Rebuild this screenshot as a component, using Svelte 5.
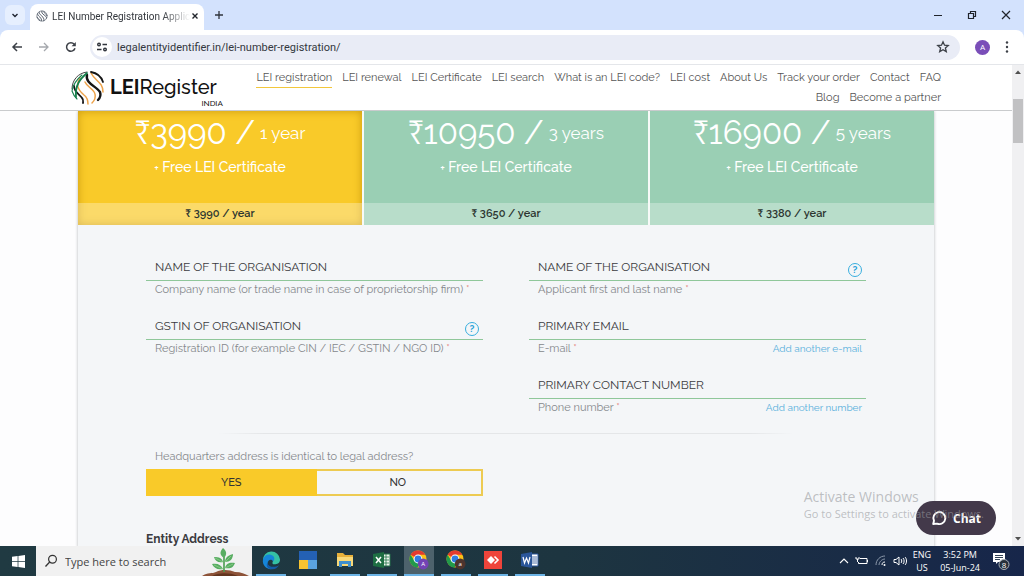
<!-- LEI registration form inside a browser window, with the desktop taskbar below. -->
<script lang="ts">
	type Field = { id: string; value: string; label: string; help?: boolean; add?: string };

	const nav = [
		'LEI registration', 'LEI renewal', 'LEI Certificate', 'LEI search', 'What is an LEI code?',
		'LEI cost', 'About Us', 'Track your order', 'Contact', 'FAQ', 'Blog', 'Become a partner'
	];

	const plans = [
		{ total: '3990', term: '1 year', yearly: '3990' },
		{ total: '10950', term: '3 years', yearly: '3650' },
		{ total: '16900', term: '5 years', yearly: '3380' }
	];

	const columns: Field[][] = [
		[
			{ id: 'company', value: 'NAME OF THE ORGANISATION', label: 'Company name (or trade name in case of proprietorship firm)' },
			{ id: 'regid', value: 'GSTIN OF ORGANISATION', label: 'Registration ID (for example CIN / IEC / GSTIN / NGO ID)', help: true }
		],
		[
			{ id: 'applicant', value: 'NAME OF THE ORGANISATION', label: 'Applicant first and last name', help: true },
			{ id: 'email', value: 'PRIMARY EMAIL', label: 'E-mail', add: 'Add another e-mail' },
			{ id: 'phone', value: 'PRIMARY CONTACT NUMBER', label: 'Phone number', add: 'Add another number' }
		]
	];

	const apps = ['edge', 'panel', 'files', 'excel', 'chrome', 'chrome2', 'anydesk', 'word'];

	let selected = $state(0);
	let sameAddress = $state('yes');
</script>

{#snippet chrome(badge: string, letter: string)}
	<svg viewBox="0 0 20 20" width="20" height="20">
		<circle cx="9" cy="9" r="8.5" fill="#fbc116" />
		<path d="M9 9 1.6 4.7A8.5 8.5 0 0 1 16.4 4.7H9Z" fill="#e33b2e" />
		<path d="M1.6 4.7A8.5 8.5 0 0 0 8.5 17.5L12.5 11 9 9 5.5 11Z" fill="#229a4b" />
		<circle cx="9" cy="9" r="4.4" fill="#fff" />
		<circle cx="9" cy="9" r="3.4" fill="#2f7de1" />
		<circle cx="14.2" cy="14" r="5.4" fill={badge} />
		<text x="14.2" y="16.2" font-size="6" fill="#fff" text-anchor="middle">{letter}</text>
	</svg>
{/snippet}

<div class="window">
	<div class="tabs">
		<button class="tab-search" aria-label="Search tabs">
			<svg viewBox="0 0 10 10" width="10" height="10"><path d="M2.5 4 5 6.5 7.5 4" fill="none" stroke="#1f2430" stroke-width="1.4" /></svg>
		</button>
		<div class="tab">
			<svg viewBox="0 0 14 14" width="12" height="12">
				<g fill="none" stroke="#4b5563" stroke-width="1.1">
					<circle cx="7" cy="7" r="6" stroke-width=".7" />
					<path d="M4 2C2 5 11 8 9 13M7 1C5 5 14 7 12 10M2 4C1 7 8 9 6 13M9 1.5C9 4 13 5 13 7M1 8C2 10 4 10 4 12.5" />
				</g>
			</svg>
			<span class="tab-title">LEI Number Registration Applic</span>
			<button aria-label="Close tab">
				<svg viewBox="0 0 8 8" width="8" height="8"><path d="m1.5 1.5 5 5m0-5-5 5" stroke="#20242b" stroke-width="1.4" /></svg>
			</button>
		</div>
		<button class="new-tab" aria-label="New tab">
			<svg viewBox="0 0 10 10" width="10" height="10"><path d="M5 1v8M1 5h8" stroke="#30343c" stroke-width="1.3" /></svg>
		</button>
		<div class="window-buttons">
			<button aria-label="Minimize"><svg viewBox="0 0 10 10" width="10" height="10"><path d="M1 5.5h8" stroke="#20242b" /></svg></button>
			<button aria-label="Restore">
				<svg viewBox="0 0 10 10" width="10" height="10"><path d="M1.5 3.5h5v5h-5zM3.5 3.2V1.5h5v5H6.8" fill="none" stroke="#20242b" stroke-width="1.2" /></svg>
			</button>
			<button aria-label="Close"><svg viewBox="0 0 10 10" width="10" height="10"><path d="m1 1 8 8m0-8L1 9" stroke="#20242b" stroke-width="1.2" /></svg></button>
		</div>
	</div>

	<div class="toolbar">
		<button aria-label="Back"><svg viewBox="0 0 12 12" width="12" height="12"><path d="M11 6H2m4-4L2 6l4 4" fill="none" stroke="#3c4047" stroke-width="1.5" /></svg></button>
		<button aria-label="Forward"><svg viewBox="0 0 12 12" width="12" height="12"><path d="M1 6h9M6 2l4 4-4 4" fill="none" stroke="#a5a8ad" stroke-width="1.3" /></svg></button>
		<button aria-label="Reload">
			<svg viewBox="0 0 12 12" width="12" height="12"><path d="M10 7.2A4.3 4.3 0 1 1 9.2 3.2" fill="none" stroke="#3c4047" stroke-width="1.5" /><path d="M10.8 1v4.2H6.6Z" fill="#3c4047" /></svg>
		</button>
		<div class="address">
			<button class="site-info" aria-label="Site information">
				<svg viewBox="0 0 12 12" width="12" height="12">
					<g fill="none" stroke="#30343c" stroke-width="1.4"><circle cx="3" cy="3.5" r="1.3" /><path d="M6.5 3.5H11M1 8.5h4.5" /><circle cx="9" cy="8.5" r="1.3" /></g>
				</svg>
			</button>
			<input aria-label="Address" value="legalentityidentifier.in/lei-number-registration/" />
			<button aria-label="Bookmark">
				<svg viewBox="0 0 14 14" width="14" height="14"><path d="m7 1.8 1.5 3.4 3.7.3-2.8 2.4.9 3.7L7 9.7l-3.3 1.9.9-3.7-2.8-2.4 3.7-.3Z" fill="none" stroke="#3c4047" stroke-width="1.3" /></svg>
			</button>
		</div>
		<button class="profile" aria-label="Profile">A</button>
		<button aria-label="Menu">
			<svg viewBox="0 0 4 12" width="4" height="12"><g fill="#3c4047"><circle cx="2" cy="1.5" r="1.2" /><circle cx="2" cy="6" r="1.2" /><circle cx="2" cy="10.5" r="1.2" /></g></svg>
		</button>
	</div>

	<div class="viewport">
		<div class="page">
			<header>
				<div class="header-inner">
					<a class="logo" href="#home" aria-label="LEI Register India">
						<svg viewBox="0 0 34 34" width="34" height="34">
							<g fill="none" stroke-linecap="round">
								<path d="M1 18C1 9 7 2 16 1" stroke="#444" stroke-width="1" />
								<path d="M9 7C4 15 8 20 13 24c4 3 4 6 4 9" stroke="#eda34b" stroke-width="1.5" />
								<path d="M3 15c0 6 6 9 8 12 2 2 1 4 1 5" stroke="#151515" stroke-width="1.8" />
								<path d="M14 11c2 5 9 7 10 12 1 4-1 7-3 9" stroke="#eda34b" stroke-width="1.5" />
								<path d="M16 4c-2 8 9 11 13 17 1 3 0 6-2 8" stroke="#151515" stroke-width="2.4" />
								<path d="M20 2c4 8 12 9 12 19" stroke="#eda34b" stroke-width="1.5" />
								<path d="M20 1c6 1 10 4 12 10" stroke="#151515" stroke-width="1.8" />
								<path d="M16 2C9 8 4 14 5 26" stroke="#16814d" stroke-width="1.8" />
								<path d="M11 4C5 9 2 14 1 20c1 3 3 6 5 8" stroke="#16814d" stroke-width="1.1" />
							</g>
						</svg>
						<span class="wordmark"><span class="name"><b>LEI</b>Register</span><small>INDIA</small></span>
					</a>
					<nav>
						{#each nav as item, i}
							<a href="#{i}" class:current={i === 0}>{item}</a>
						{/each}
					</nav>
				</div>
			</header>

			<main>
				<div class="plans">
					{#each plans as plan, i}
						<button class="plan" class:selected={selected === i} onclick={() => (selected = i)}>
							<span class="price">₹{plan.total} / <span class="term">{plan.term}</span></span>
							<span class="free"><span class="plus">+</span> Free LEI Certificate</span>
							<span class="yearly">₹ {plan.yearly} / year</span>
						</button>
					{/each}
				</div>

				<form>
					<div class="columns">
						{#each columns as fields}
							<div class="column">
								{#each fields as field}
									<div class="field">
										<div class="entry">
											<input id={field.id} value={field.value} />
											{#if field.help}<button type="button" class="help" aria-label="Help">?</button>{/if}
										</div>
										<div class="caption">
											<label for={field.id}>{field.label} <span class="required">*</span></label>
											{#if field.add}<a href="#{field.id}">{field.add}</a>{/if}
										</div>
									</div>
								{/each}
							</div>
						{/each}
					</div>
					<hr />
					<fieldset>
						<legend>Headquarters address is identical to legal address?</legend>
						<div class="toggle">
							<label><input type="radio" name="same" value="yes" bind:group={sameAddress} />YES</label>
							<label><input type="radio" name="same" value="no" bind:group={sameAddress} />NO</label>
						</div>
					</fieldset>
					<h2>Entity Address</h2>
				</form>
			</main>
		</div>

		<div class="scrollbar" aria-hidden="true">
			<svg viewBox="0 0 8 6" width="8" height="6"><path d="M1 5h6L4 1.5Z" fill="#505050" /></svg>
			<div class="track"><div class="thumb"></div></div>
			<svg viewBox="0 0 8 6" width="8" height="6"><path d="M1 1h6L4 4.5Z" fill="#505050" /></svg>
		</div>

		<button class="chat">
			<svg viewBox="0 0 16 16" width="16" height="16"><path d="M2.2 14 3 10.8A6 6 0 1 1 6 13.6Z" fill="none" stroke="#fff" stroke-width="1.9" stroke-linejoin="round" /></svg>
			Chat
		</button>
		<div class="watermark">
			<strong>Activate Windows</strong>
			<span>Go to Settings to activate Windows.</span>
		</div>
	</div>

	<div class="taskbar">
		<button class="start" aria-label="Start">
			<svg viewBox="0 0 12 12" width="13" height="13"><path d="M0 1.7 5.2 1v4.7H0zM5.9.9 12 0v5.7H5.9zM0 6.4h5.2V11L0 10.3zM5.9 6.4H12V12l-6.1-.9z" fill="#fff" /></svg>
		</button>
		<label class="search">
			<svg viewBox="0 0 14 14" width="14" height="14"><circle cx="8.5" cy="5.2" r="3.9" fill="none" stroke="#333" stroke-width="1.2" /><path d="M5.7 8 1.5 12.5" stroke="#333" stroke-width="1.3" /></svg>
			<input type="search" placeholder="Type here to search" aria-label="Type here to search" />
			<svg class="sprout" viewBox="0 0 48 28" width="48" height="28">
				<path d="M0 28c6-4 10-2 14-4 6-3 14-2 19 0 6 0 10 2 14 4Z" fill="#8d5338" />
				<path d="M10 28c6-3 16-4 26 0Z" fill="#63351f" />
				<path d="M22 24V9" stroke="#4a9c4f" stroke-width="1.6" />
				<g fill="#58ad62"><path d="M22 10c-5-3-4-7-1-10 4 3 4 7 1 10Z" /><path d="M21 14c-5 1-8-1-9-5 5 0 8 1 9 5Z" /><path d="M23 14c0-5 4-7 8-8 0 5-3 8-8 8Z" /><path d="M21 21c-6 1-9-1-11-5 6-1 9 1 11 5Z" /><path d="M23 20c1-5 5-6 10-5-2 5-5 6-10 5Z" /></g>
				<path d="m13 10 8 4m2 0 6-6M12 17l9 4m2-1 8-4" stroke="#98d292" stroke-width=".7" />
			</svg>
		</label>
		<div class="apps">
			{#each apps as app}
				<button class="app" class:open={app !== 'panel'} class:active={app === 'chrome'} aria-label={app}>
					{#if app === 'edge'}
						<svg viewBox="0 0 20 20" width="19" height="19">
							<path d="M1 10a9 9 0 0 1 18-1c0 4-3 5-6 5-2 0-2-1-2-2 1-1 1-5-4-5-3 0-5 1-6 3Z" fill="#35c1a4" />
							<path d="M1 9c1-4 5-6 8-5 4 1 5 4 3 7-2-3-6-2-6 2 0 3 2 5 5 6C5 20 0 15 1 9Z" fill="#1686d8" />
							<path d="M6 12c0 5 7 6 12 3-2 3-5 5-9 4-4-1-5-5-3-7Z" fill="#145ba7" />
						</svg>
					{:else if app === 'panel'}
						<svg viewBox="0 0 18 18" width="18" height="18"><path d="M0 0h18v18H0z" fill="#2461b4" /><path d="M0 9h9v9H0z" fill="#f7c331" /><path d="M9 9h9v9H9z" fill="#5ba3de" /></svg>
					{:else if app === 'files'}
						<svg viewBox="0 0 18 16" width="18" height="16"><path d="M1 1h6l2 2h8v11H1z" fill="#e8b13b" /><path d="M1 5h16v9H1z" fill="#f9d978" /><path d="M3 9h12v6h-3v-3H6v3H3z" fill="#3f8fcd" /></svg>
					{:else if app === 'excel'}
						<svg viewBox="0 0 18 16" width="18" height="16"><path d="M8 2h9v12H8z" fill="#eef5ef" stroke="#24734a" /><path d="M9 5h7M9 8h7M9 11h7M13 2v12" stroke="#24734a" stroke-width=".8" /><path d="m0 2 11-2v16L0 14z" fill="#1e6e43" /><path d="m3 5 5 6m0-6-5 6" stroke="#fff" stroke-width="1.5" /></svg>
					{:else if app === 'chrome'}
						{@render chrome('#7342b5', 'A')}
					{:else if app === 'chrome2'}
						{@render chrome('#4d342e', 'a')}
					{:else if app === 'anydesk'}
						<svg viewBox="0 0 18 18" width="18" height="18"><path d="M0 0h18v18H0z" fill="#ef443b" /><path d="m7 5 4 4-4 4-4-4Z" fill="#fff" /><path d="m10.5 5.5 3.5 3.5-3.5 3.5" fill="none" stroke="#fff" stroke-width="1.6" /></svg>
					{:else}
						<svg viewBox="0 0 18 16" width="18" height="16"><path d="M8 2h9v12H8z" fill="#fff" stroke="#2b579a" /><path d="M10 5h6m-6 2h6m-6 2h6m-6 2h6" stroke="#2b579a" stroke-width=".8" /><path d="m0 2 11-2v16L0 14z" fill="#2b579a" /><path d="m2 5 1.5 6 2-5 2 5L9 5" fill="none" stroke="#fff" stroke-width="1.2" /></svg>
					{/if}
				</button>
			{/each}
		</div>
		<div class="tray">
			<svg viewBox="0 0 10 10" width="10" height="10"><path d="m1 7 4-4 4 4" fill="none" stroke="#fff" stroke-width="1.1" /></svg>
			<svg viewBox="0 0 14 10" width="14" height="10"><path d="M5 2.5h7v5H3.5V6M12.5 4v2M1 1v2h3V1M2.5 3v3" fill="none" stroke="#fff" /></svg>
			<svg viewBox="0 0 12 12" width="12" height="12"><g fill="none" stroke="#8b98aa"><path d="M1 10C1 5 5 1 10 1M4 10c0-3 3-6 6-6" /><path d="M7 10c0-2 1-3 3-3" stroke="#fff" /></g><circle cx="9.5" cy="10" r="1" fill="#fff" /></svg>
			<svg viewBox="0 0 14 12" width="14" height="12"><path d="M1 4.5h2L6 2v8L3 7.5H1ZM8 4c1 1 1 3 0 4M10 3c1.5 1.5 1.5 4.5 0 6M12 2c2 2 2 6 0 8" fill="none" stroke="#fff" /></svg>
			<div class="stack lang"><span>ENG</span><span>US</span></div>
			<div class="stack clock"><span>3:52 PM</span><span>05-Jun-24</span></div>
			<button class="notices" aria-label="Notifications">
				<svg viewBox="0 0 18 20" width="18" height="20"><path d="M1 2h12v9H6l-2 2v-2H1Z" fill="#fff" /><path d="M3 4.5h8M3 6.5h8M3 8.5h5" stroke="#1b2c42" stroke-width=".9" /><circle cx="12" cy="13.5" r="5" fill="#27313c" stroke="#a9b0b8" /><text x="12" y="16.5" font-size="8" fill="#fff" text-anchor="middle">8</text></svg>
			</button>
		</div>
	</div>
</div>

<style>
	:global(body) {
		margin: 0;
	}
	.window {
		--ui: Roboto, 'Open Sans', sans-serif;
		--segoe: 'Open Sans', 'Noto Sans', sans-serif;
		--site: Raleway, Lato, sans-serif;
		--yellow: #f9ca29;
		display: flex;
		flex-direction: column;
		height: 100vh;
		overflow: hidden;
		background: #d3e2fd;
		font-family: var(--ui);
		font-size: 11px;
	}
	.window * {
		box-sizing: border-box;
	}
	button,
	input {
		font: inherit;
		color: inherit;
		border: 0;
		padding: 0;
		background: none;
		min-width: 0;
	}
	button {
		display: inline-flex;
		align-items: center;
		justify-content: center;
	}
	svg {
		flex: none;
	}
	a {
		color: inherit;
		text-decoration: none;
	}

	/* browser frame */
	.tabs {
		display: flex;
		align-items: center;
		height: 30px;
		flex: none;
		padding-left: 5px;
	}
	.tab-search {
		width: 20px;
		height: 20px;
		border-radius: 6px;
		background: #e6effe;
	}
	.tab {
		display: flex;
		align-items: center;
		align-self: flex-end;
		gap: 4px;
		width: 174px;
		height: 26px;
		margin-left: 5px;
		padding: 0 8px 2px 6px;
		border-radius: 8px 8px 0 0;
		background: #fff;
		color: #33373d;
	}
	.tab-title {
		flex: 1;
		white-space: nowrap;
		font-size: 10px;
		mask-image: linear-gradient(to right, #000 80%, transparent);
	}
	.new-tab {
		margin-left: 10px;
	}
	.window-buttons {
		display: flex;
		gap: 24px;
		margin-left: auto;
		padding-right: 13px;
	}
	.toolbar {
		display: flex;
		align-items: center;
		gap: 15px;
		height: 35px;
		flex: none;
		padding: 0 15px 0 11px;
		border-bottom: 1px solid #e4e6ea;
		border-radius: 8px 8px 0 0;
		background: #fff;
	}
	.address {
		display: flex;
		align-items: center;
		flex: 1;
		gap: 5px;
		height: 25px;
		margin-left: -2px;
		padding: 0 10px 0 2px;
		border-radius: 13px;
		background: #e9ecf6;
		color: #34383f;
	}
	.address input {
		flex: 1;
	}
	.site-info {
		width: 20px;
		height: 20px;
		border-radius: 50%;
		background: #fff;
	}
	.profile {
		width: 15px;
		height: 15px;
		border-radius: 50%;
		background: #7a4eb8;
		color: #fff;
		font-size: 8px;
	}

	/* site */
	.viewport {
		position: relative;
		display: flex;
		flex: 1;
		min-height: 0;
		background: #fdfdfe;
	}
	.page {
		display: flex;
		flex-direction: column;
		flex: 1;
		min-width: 0;
		overflow: hidden;
		font-family: var(--site);
	}
	header {
		position: relative;
		z-index: 1;
		flex: none;
		border-bottom: 1px solid #c9cbcd;
		background: #fff;
	}
	.header-inner {
		display: flex;
		justify-content: space-between;
		max-width: 870px;
		height: 45px;
		margin: 0 auto;
	}
	.logo {
		display: flex;
		align-items: center;
		gap: 5px;
		color: #111;
	}
	.wordmark {
		display: flex;
		flex-direction: column;
		padding-top: 8px;
		font-size: 20px;
		font-weight: 500;
		line-height: 23px;
	}
	.name {
		padding-right: 6px;
	}
	.wordmark small {
		align-self: flex-end;
		font-size: 8px;
		line-height: 8px;
	}
	nav {
		display: flex;
		flex-wrap: wrap;
		justify-content: flex-end;
		align-content: flex-start;
		gap: 0 10px;
		max-width: 700px;
		padding-top: 3px;
		color: #555;
		font-size: 11px;
		line-height: 19px;
	}
	nav a {
		border-bottom: 1px solid transparent;
	}
	nav a.current {
		border-bottom-color: #f2c73c;
	}
	main {
		flex: 1 0 auto;
		width: 100%;
		max-width: 856px;
		margin: 0 auto;
		background: #f4f6f8;
		box-shadow: 0 0 3px #b4b6ba;
	}
	.plans {
		display: grid;
		grid-template-columns: repeat(3, 1fr);
		gap: 2px;
		background: #f7faf8;
	}
	.plan {
		display: flex;
		flex-direction: column;
		align-items: stretch;
		background: #9acfb4;
		color: #fff;
		font-size: 14px;
	}
	.plan.selected {
		background: var(--yellow);
		box-shadow: inset 0 0 8px #c99a10;
	}
	.price {
		display: flex;
		align-items: center;
		justify-content: center;
		gap: 5px;
		font-size: 33px;
		line-height: 44px;
		font-variant-numeric: oldstyle-nums;
	}
	.term {
		font-size: 17px;
	}
	.free {
		padding-bottom: 22px;
		font-weight: 500;
		line-height: 24px;
	}
	.plus {
		font-size: 11px;
	}
	.yearly {
		background: rgb(255 255 255 / 0.3);
		color: #2c3530;
		font-size: 11px;
		font-weight: 600;
		line-height: 22px;
		font-variant-numeric: oldstyle-nums;
	}
	form {
		padding: 29px 68px 0;
	}
	.columns {
		display: grid;
		grid-template-columns: 1fr 1fr;
		gap: 46px;
	}
	.column {
		display: flex;
		flex-direction: column;
		gap: 15px;
	}
	.entry {
		display: flex;
		align-items: center;
		height: 27px;
		padding: 0 4px 0 9px;
		border-bottom: 1px solid #8fc79a;
		color: #3b3b40;
		font-size: 12px;
	}
	.entry input {
		flex: 1;
	}
	.help {
		width: 14px;
		height: 14px;
		margin-top: 5px;
		border: 1px solid #38aede;
		border-radius: 50%;
		color: #22a0d8;
		font-size: 10px;
		font-weight: 700;
	}
	.caption {
		display: flex;
		justify-content: space-between;
		padding: 0 4px 0 9px;
		color: #85888c;
		font-size: 11px;
		line-height: 17px;
	}
	.caption a {
		color: #58b0dc;
		font-size: 10px;
	}
	.required {
		color: #e58a80;
	}
	hr {
		height: 1px;
		margin: 17px 72px 14px;
		border: 0;
		background: linear-gradient(to right, transparent, #e4e6e8 8%, #e4e6e8 92%, transparent);
	}
	fieldset {
		width: calc(50% - 23px);
		margin: 0;
		padding: 0;
		border: 0;
	}
	legend {
		padding: 0 9px 4px;
		color: #85888c;
		font-size: 11px;
		line-height: 17px;
	}
	.toggle {
		display: grid;
		grid-template-columns: 1fr 1fr;
		border: 2px solid #edcb52;
	}
	.toggle label {
		color: #333;
		font-size: 11px;
		font-weight: 500;
		line-height: 23px;
		text-align: center;
	}
	.toggle label:has(:checked) {
		background: var(--yellow);
		box-shadow: 0 0 0 2px var(--yellow);
	}
	.toggle input {
		width: 0;
		height: 0;
		margin: 0;
		appearance: none;
	}
	h2 {
		margin: 34px 0 0;
		color: #3b3b3f;
		font-size: 12px;
		line-height: 18px;
	}
	.scrollbar {
		display: flex;
		flex-direction: column;
		align-items: center;
		width: 12px;
		padding: 4px 0;
		background: #f0f0f2;
	}
	.track {
		display: flex;
		flex: 1;
		flex-direction: column;
		padding-top: 24px;
	}
	.thumb {
		width: 10px;
		height: 10%;
		background: #c1c1c3;
	}
	.chat {
		position: absolute;
		right: 28px;
		bottom: 11px;
		gap: 6px;
		width: 80px;
		height: 34px;
		border-radius: 17px;
		background: #43394a;
		color: #fff;
		font-family: var(--segoe);
		font-size: 12px;
		font-weight: 700;
	}
	.watermark {
		position: absolute;
		right: 40px;
		bottom: 24px;
		display: flex;
		flex-direction: column;
		color: rgb(150 152 156 / 0.6);
		font-family: var(--segoe);
		font-size: 11px;
		line-height: 16px;
		pointer-events: none;
	}
	.watermark strong {
		font-size: 14px;
		font-weight: 400;
		line-height: 18px;
	}

	/* desktop taskbar */
	.taskbar {
		display: flex;
		height: 30px;
		flex: none;
		background: linear-gradient(to right, #203a42, #1d3540 55%, #17264a);
		color: #fff;
		font-family: var(--segoe);
	}
	.start {
		width: 36px;
	}
	.search {
		display: flex;
		align-items: center;
		gap: 7px;
		width: 216px;
		padding: 0 2px 0 8px;
		background: #f1f1f1;
		color: #333;
	}
	.search input {
		flex: 1;
	}
	.search input::placeholder {
		color: #444;
		opacity: 1;
	}
	.sprout {
		align-self: flex-end;
	}
	.apps {
		display: flex;
		gap: 7px;
		padding-left: 4px;
	}
	.app {
		width: 30px;
		border-bottom: 2px solid transparent;
	}
	.app.open {
		border-color: #6cb4e6;
	}
	.app.active {
		background: #4d626c;
	}
	.tray {
		display: flex;
		align-items: center;
		gap: 6px;
		margin-left: auto;
		padding-right: 14px;
	}
	.stack {
		display: flex;
		flex-direction: column;
		align-items: center;
		font-size: 9px;
		line-height: 13px;
	}
	.clock {
		margin: 0 6px 0 3px;
	}
</style>
